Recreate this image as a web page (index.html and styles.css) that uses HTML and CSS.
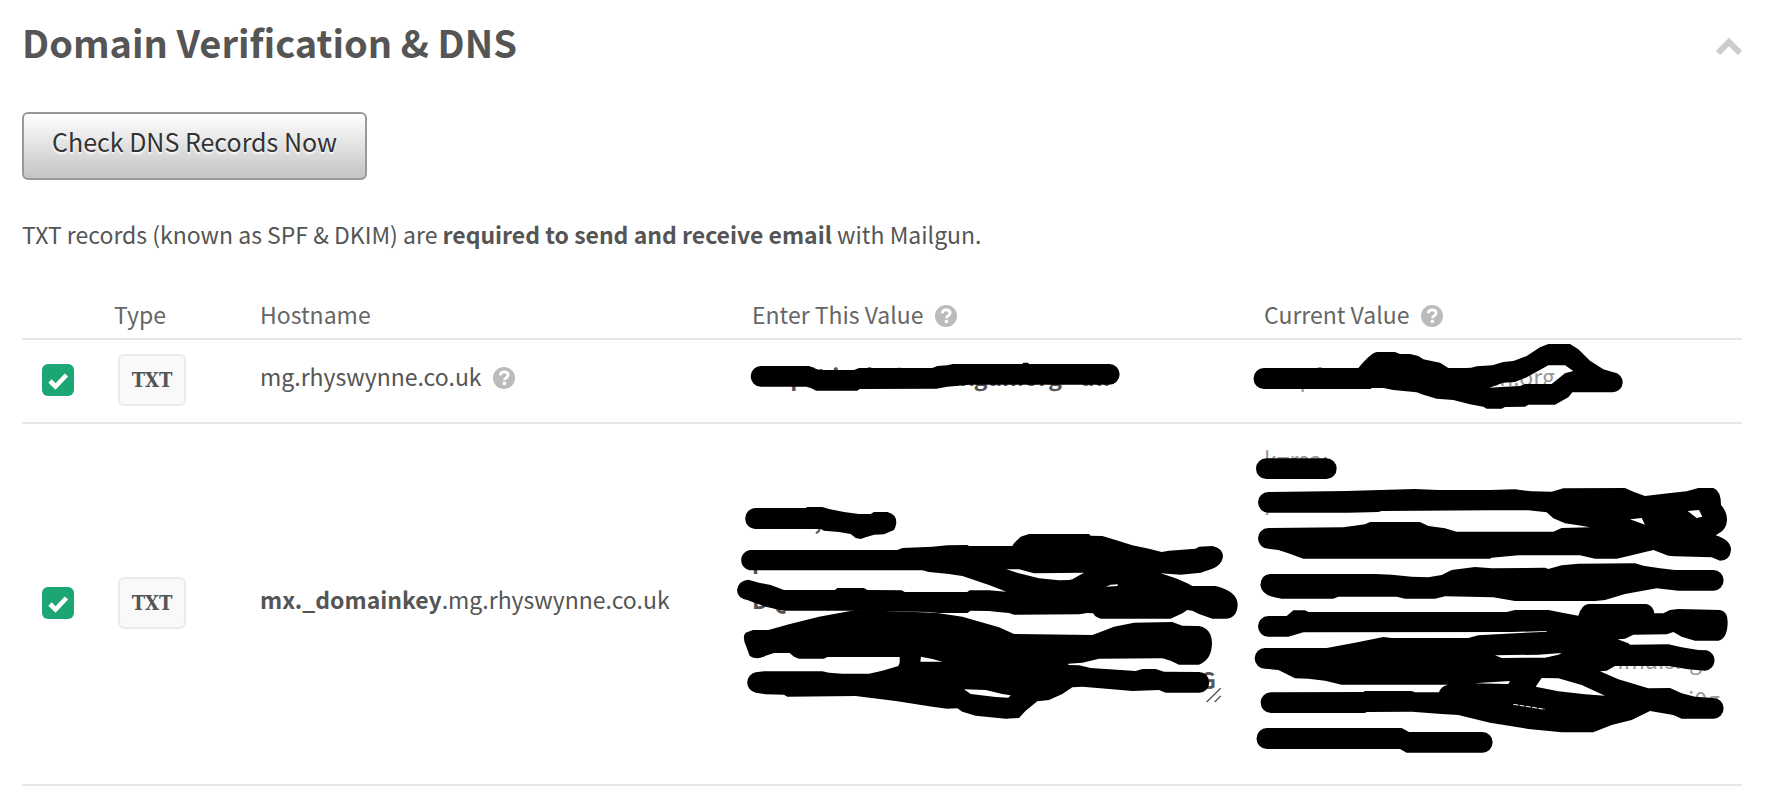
FILE: index.html
```html
<!DOCTYPE html>
<html lang="en">
<head>
    <meta charset="UTF-8">
    <meta name="viewport" content="width=device-width, initial-scale=1.0">
    <title>Domain Verification &amp; DNS</title>
    <link rel="stylesheet" href="styles.css">
</head>
<body>
    <svg class="defs" aria-hidden="true">
        <symbol id="help" viewBox="0 0 22 22">
            <circle cx="11" cy="11" r="11" fill="#bbb"/>
            <path d="M7.2 8.4C7.4 6 8.900 4.900 11.200 4.900c2.300 0 3.900 1.200 3.900 3.100 0 2.500-3.600 2.600-3.600 5.200" fill="none" stroke="#fff" stroke-width="2.800"/>
            <rect x="9.800" y="14.800" width="3.200" height="3.200" fill="#fff"/>
        </symbol>
        <symbol id="tick" viewBox="0 0 32 32">
            <path d="M8 17l5.500 5.500L24.500 11" fill="none" stroke="#fff" stroke-width="4.600"/>
        </symbol>
    </svg>

    <header class="panel-header">
        <h1>Domain Verification &amp; DNS</h1>
        <button class="collapse" type="button" aria-label="Collapse">
            <svg width="26" height="20" viewBox="0 0 26 20"><path d="M2 17L13 6l11 11" fill="none" stroke="#ccc" stroke-width="6"/></svg>
        </button>
    </header>

    <main>
        <button class="btn" type="button">Check DNS Records Now</button>

        <p class="intro">TXT records (known as SPF &amp; DKIM) are <strong>required to send and receive email</strong> with Mailgun.</p>

        <table class="records">
            <colgroup>
                <col class="col-check">
                <col class="col-type">
                <col class="col-host">
                <col class="col-enter">
                <col>
            </colgroup>
            <thead>
                <tr>
                    <th></th>
                    <th>Type</th>
                    <th>Hostname</th>
                    <th>Enter This Value <svg class="help"><use href="#help"/></svg></th>
                    <th>Current Value <svg class="help"><use href="#help"/></svg></th>
                </tr>
            </thead>
            <tbody>
                <tr class="row-spf">
                    <td>
                        <label class="check">
                            <input type="checkbox" checked aria-label="mg.rhyswynne.co.uk verified">
                            <svg><use href="#tick"/></svg>
                        </label>
                    </td>
                    <td><span class="type">TXT</span></td>
                    <td class="host">mg.rhyswynne.co.uk <svg class="help"><use href="#help"/></svg></td>
                    <td class="value enter">
                        v=spf1 include:mailgun.org ~all
                        <svg class="marker" width="511" height="82" viewBox="69 150 1533 246">
                            <path d="M96 228H240L270 240H375L390 234H610L625 228L655 226L672 222H880L883 218H897L900 222H1141A31 31 0 0 1 1141 284H720L655 290L622 296L392 297L385 302H262L245 294L232 290H96A31 31 0 0 1 96 228Z"/>
                        </svg>
                    </td>
                    <td class="value current">
                        v=spf1 include:mailgun.org ~all
                        <svg class="marker" width="477" height="82" viewBox="72 150 1431 246">
                            <path d="M72 234H355Q395 186 412 186H465L480 192H510L535 198L550 208L578 214L600 218L625 234H690L710 229L757 226L790 216L820 213L860 198L900 172L925 162H990L1015 178L1050 212L1090 238L1120 247A30 30 0 0 1 1116 307H997L985 322L945 344H865L855 350L795 351L785 356H740L730 350L690 343L640 330L590 326L550 314L530 307L460 300L430 294H395L392 297H72A31 31 0 0 1 72 234ZM748 293L795 290L840 288L855 282H935L975 250L1000 243L975 226H925L860 262L825 276L790 278Z"/>
                        </svg>
                    </td>
                </tr>
                <tr class="row-dkim">
                    <td>
                        <label class="check">
                            <input type="checkbox" checked aria-label="mx._domainkey.mg.rhyswynne.co.uk verified">
                            <svg><use href="#tick"/></svg>
                        </label>
                    </td>
                    <td><span class="type">TXT</span></td>
                    <td class="host"><strong>mx._domainkey</strong>.mg.rhyswynne.co.uk</td>
                    <td class="value enter">
                        <p>k=rsa;</p>
                        <p>p=</p>
                        <p>DQ</p>
                        <p>&nbsp;</p>
                        <p class="tail">G</p>
                        <svg class="marker" width="511" height="360" viewBox="69 -198 1533 1080">
                            <path d="M80 54H230L235 51H280L300 57L345 66L390 72H425L435 66H475Q502 72 502 98Q500 112 495 120L465 133L435 134L410 142L395 147L380 144L365 132L330 126L285 122L275 117H80A31 31 0 0 1 80 54Z"/>
                            <path d="M62 180H505L520 174L610 170L655 166L715 165L720 168H850L855 160L875 140L900 132H1080L1085 137L1120 138L1160 150L1210 166L1260 176L1298 186L1320 182L1400 176L1410 170L1450 168Q1482 175 1482 200Q1478 225 1450 236L1415 248L1355 254L1295 250L1340 265L1375 280L1390 288H1460Q1526 304 1526 345Q1524 385 1490 386H1450L1410 372L1390 362L1375 360L1360 370L1325 386H1115Q1095 380 1093 370L1075 369L1050 373L855 374L840 369L800 365L780 363L725 362L715 369H630L600 366L380 362H165L110 350L80 340L55 330Q25 325 24 300Q28 272 58 269L90 278L125 285L165 300H318L325 294H405L415 300L518 301L527 306H715L722 301H780L832 305L780 285L700 258L660 252L600 246L580 241H62A31 31 0 0 1 62 180ZM832 238L870 250L930 265L990 271L1020 270L1030 268L1065 248L915 250L870 238ZM1130 290L1165 288L1167 283L1145 284Z"/>
                            <path d="M72 420H118L180 403L270 380L380 360L620 368L700 380L810 412L855 432L1090 435L1130 420L1155 410L1215 398L1330 396L1360 407L1410 408Q1448 415 1449 460Q1448 510 1410 524H1350L1325 512L1300 505L1110 506L1060 518L1018 521V525L1050 526L1085 534L1220 543L1240 537H1280L1305 545L1410 546A31 31 0 0 1 1410 608H1310L1290 600L1210 603L1150 598L1060 590L1030 592L1000 612L960 630L925 634L890 662L870 684L830 686L740 677L700 665L685 655L655 656L610 650L500 633L380 618L175 620L165 614L110 613L80 608A31 31 0 0 1 80 547L105 544H280L300 548L340 551H420L460 542L508 528L512 518V501H295L285 506H210L195 500L182 489H135L110 497Q85 512 62 498L52 470Q38 440 50 428ZM576 500L574 515H640L610 507ZM705 598L725 612L800 621L838 623L845 616L820 612L770 600Z"/>
                            <path class="grip" d="M1433 636L1475 595M1457 636L1475 618"/>
                        </svg>
                    </td>
                    <td class="value current">
                        <p>k=rsa;</p>
                        <p>p=</p>
                        <p>&nbsp;</p>
                        <p>&nbsp;</p>
                        <p>&nbsp;</p>
                        <p class="tail">imaisng</p>
                        <p class="tail tail-long">ni0g</p>
                        <p>&nbsp;</p>
                        <svg class="marker" width="477" height="360" viewBox="57 -18 1431 1080">
                            <path d="M64 85H244A31 31 0 0 1 244 147H64A31 31 0 0 1 64 85Z"/>
                            <path d="M70 186L305 183L405 180L510 177L580 180H735L810 178L860 184L920 185L955 175L1140 174L1165 185L1200 198L1270 190L1325 184L1360 174H1405Q1428 182 1428 225Q1446 245 1446 270Q1446 300 1412 316Q1458 330 1458 360Q1455 392 1425 392L1400 382L1290 379L1270 377L1225 360L1160 376L1115 386H1050L1005 376H820L740 383L735 386H175L130 370L100 360L70 356A31 31 0 0 1 70 294L295 292L360 283L375 276H525L550 288L600 295L635 305H925L950 294L1035 292L1000 286L960 280L925 265L905 247L850 241H740L410 243L400 246L310 248H70A31 31 0 0 1 70 186ZM1155 268L1200 284L1190 264ZM1328 243L1355 264L1372 260L1362 240Z"/>
                            <path d="M75 432H390L440 434L500 440L550 442L590 435L620 420L690 411L740 415L900 413L910 417L950 406L1000 401L1170 400L1195 407L1245 415L1290 420H1405A31 31 0 0 1 1405 482H1300L1235 475L1140 492L1080 510L1050 513H810L745 502L600 499L570 506H480L455 500H280L265 506H110Q50 500 46 465Q48 434 75 432Z"/>
                            <path d="M70 558H125L145 541H180L190 546H785L810 540H910L960 550L1000 557Q1010 524 1030 522H1205Q1225 528 1228 550H1255L1275 540L1300 537L1425 540Q1448 545 1448 575Q1448 625 1420 632H1350L1310 620L1285 606L1265 613L1165 614L1140 626L1118 628L1150 640L1155 644L1270 643L1310 652L1360 660L1385 661A31 31 0 0 1 1380 722L1330 718L1270 708H1110L1085 722L1065 724L1120 748L1210 775L1275 774L1310 790L1350 800L1405 804A31 31 0 0 1 1405 866H1310L1285 855L1215 843L1160 870L1100 885L1045 907H950L850 897L735 878L640 855L590 852L500 845L365 846L360 849H78A31 31 0 0 1 78 787L355 786L360 783H500L510 787H582Q588 768 610 764H290L240 752L190 746L150 745L100 720L60 716A31 31 0 0 1 60 654H245L330 638L415 621L440 624H670L700 616L810 610L905 605V603L800 606L175 607L130 620H70A31 31 0 0 1 70 558ZM750 676L770 684L900 683L940 674L950 669L880 674ZM688 760L790 762L795 753ZM872 770L940 784L1020 793L1080 797L1010 765L940 745L890 744Z"/>
                            <path d="M66 894H470L492 906H712A31 31 0 0 1 712 968H485L465 957H66A31 31 0 0 1 66 894Z"/>
                            <path class="scratch" d="M805 823L900 838"/>
                        </svg>
                    </td>
                </tr>
            </tbody>
        </table>
    </main>
</body>
</html>
```

FILE: styles.css
```css
body {
    margin: 0;
    padding: 14px 30px 18px 22px;
    background-color: #fff;
    color: #555;
    font-family: "Noto Sans CJK JP", sans-serif;
    font-size: 23px;
    line-height: 40px;
}
p {
    margin: 0;
}
.defs {
    display: none;
}
.panel-header {
    display: flex;
    justify-content: space-between;
    align-items: center;
    margin-bottom: 42px;
}
h1 {
    margin: 0;
    font-size: 38px;
    line-height: 56px;
    font-weight: bold;
}
.collapse {
    display: flex;
    padding: 8px 0 0;
    border: 0;
    background: none;
    cursor: pointer;
}
.btn {
    display: block;
    padding: 9px 28px 19px;
    border: 2px solid #999;
    border-radius: 6px;
    background: linear-gradient(#fff, #c4c4c4);
    color: #333;
    font-family: inherit;
    font-size: 25px;
    line-height: 36px;
    text-shadow: 0 2px 2px #fff;
    cursor: pointer;
}
.intro {
    margin: 34px 0 40px;
}
.records {
    width: 100%;
    table-layout: fixed;
    border-collapse: collapse;
}
.col-check {
    width: 92px;
}
.col-type {
    width: 146px;
}
.col-host {
    width: 492px;
}
.col-enter {
    width: 512px;
}
.records th,
.records td {
    padding: 0 0 4px;
    text-align: left;
    vertical-align: middle;
}
.records th {
    padding-bottom: 6px;
    color: #666;
    font-weight: 400;
}
.records tr {
    box-shadow: inset 0 -2px #e6e6e6;
}
.row-spf {
    height: 84px;
}
.row-dkim {
    height: 362px;
}
.help {
    width: 22px;
    height: 22px;
    margin-left: 6px;
    vertical-align: -3px;
}
.check {
    display: grid;
    width: 32px;
    height: 32px;
    margin-left: 20px;
}
.check input,
.check svg {
    grid-area: 1 / 1;
    width: 32px;
    height: 32px;
    margin: 0;
}
.check input {
    appearance: none;
    border-radius: 6px;
    background-color: #1ba673;
}
.check svg {
    pointer-events: none;
}
.type {
    display: block;
    width: 64px;
    margin-left: 4px;
    border: 2px solid #ebebeb;
    border-radius: 6px;
    background-color: #f9f9f9;
    font-family: "DejaVu Serif Condensed", "DejaVu Serif", serif;
    font-size: 20px;
    font-weight: bold;
    line-height: 48px;
    text-align: center;
}
.records .host,
.records .value {
    padding-bottom: 12px;
    white-space: nowrap;
}
.records .value {
    position: relative;
}
.enter {
    font-weight: bold;
}
.current {
    color: #999;
}
.tail {
    padding-right: 48px;
    text-align: right;
}
.current .tail {
    padding-right: 40px;
}
.current .tail-long {
    padding-right: 22px;
}
.marker {
    position: absolute;
    top: 0;
    left: 0;
    overflow: visible;
    fill: #000;
    pointer-events: none;
}
.grip {
    fill: none;
    stroke: #555;
    stroke-width: 4;
}
.scratch {
    stroke: #fff;
    stroke-width: 3;
    stroke-dasharray: 15 4;
}
```
